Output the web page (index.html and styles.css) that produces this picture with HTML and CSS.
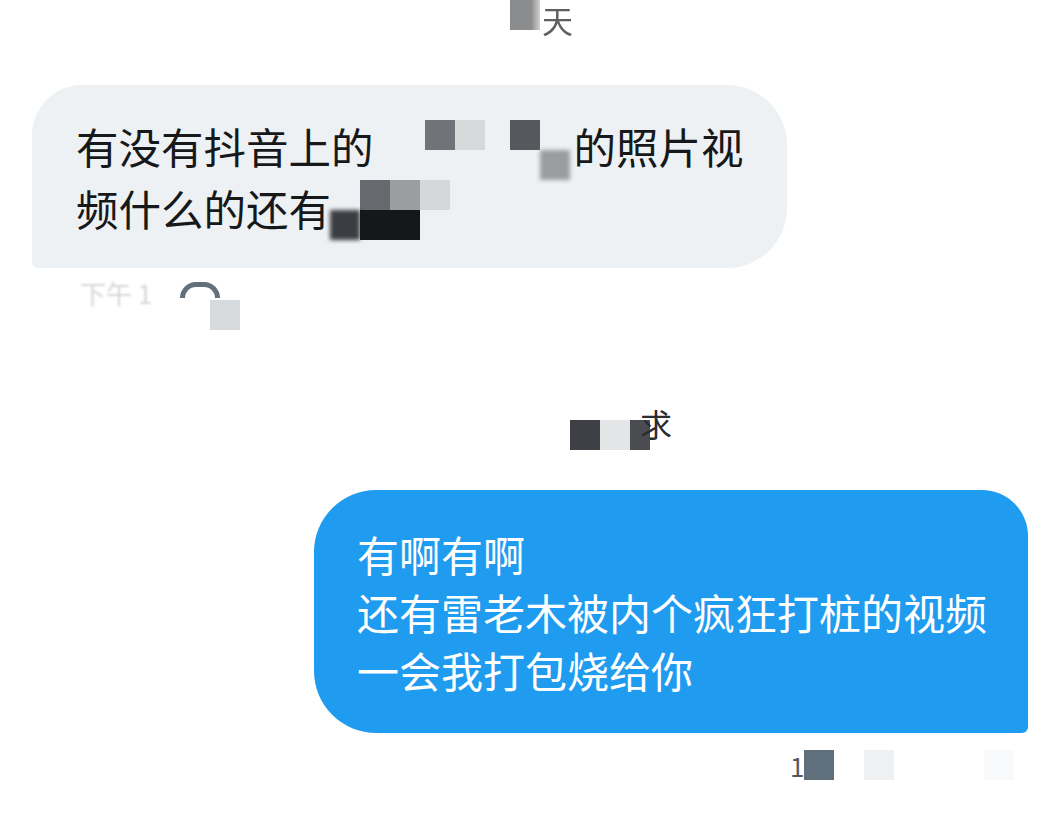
FILE: index.html
```html
<!DOCTYPE html>
<html lang="zh-CN">
<head>
  <meta charset="UTF-8">
  <title>聊天</title>
  <link rel="stylesheet" href="styles.css">
</head>
<body>

<div class="chat">
  <div class="day">
    <span class="tile t-day"></span>
    <span class="day-text">天</span>
  </div>

  <div class="bubble bubble-in">
    <p>有没有抖音上的<span class="hide hide-1"></span>的照片视</p>
    <p>频什么的还有<span class="hide hide-2"></span></p>
    <!-- 打码块 -->
    <span class="tile" style="left:393px;top:35px;background:#707378"></span>
    <span class="tile" style="left:423px;top:35px;background:#d6d8d9"></span>
    <span class="tile" style="left:478px;top:35px;background:#55585c"></span>
    <span class="tile soft" style="left:508px;top:65px;background:#9a9c9e"></span>
    <span class="tile" style="left:328px;top:95px;background:#66696d"></span>
    <span class="tile" style="left:358px;top:95px;background:#9b9ea1"></span>
    <span class="tile" style="left:388px;top:95px;background:#d5d7d8"></span>
    <span class="tile soft" style="left:298px;top:125px;background:#3a3d41"></span>
    <span class="tile wide" style="left:328px;top:125px;background:#15171a"></span>
  </div>

  <div class="meta meta-in">
    <span class="meta-text">下午 1</span>
    <span class="arc"></span>
    <span class="tile t-meta"></span>
  </div>

  <div class="request">
    <span class="tile" style="background:#3e4046"></span>
    <span class="tile" style="background:#e4e5e6"></span>
    <span class="tile narrow" style="background:#4a4c52"></span>
    <span class="request-text">求</span>
  </div>

  <div class="bubble bubble-out">
    <p>有啊有啊</p>
    <p>还有雷老木被内个疯狂打桩的视频</p>
    <p>一会我打包烧给你</p>
  </div>

  <div class="meta meta-out">
    <span class="meta-num">1:</span>
    <span class="tile t-num" style="background:#5f6f7c"></span>
    <span class="tile gap-l" style="background:#eef0f2"></span>
    <span class="tile gap-xl" style="background:#f8f9fa"></span>
  </div>
</div>

</body>
</html>
```

FILE: styles.css
```css
body {
  margin: 0;
  background: #fff;
  font-family: "Noto Sans CJK SC", "Noto Sans", sans-serif;
  color: #16181a;
}

.chat {
  width: 1063px;
  height: 838px;
  overflow: hidden;
}

p {
  margin: 0;
}

.tile {
  display: inline-block;
  width: 30px;
  height: 30px;
}

.tile.wide {
  width: 60px;
}

.tile.narrow {
  width: 20px;
}

.tile.soft {
  filter: blur(2px);
}

.bubble .tile {
  position: absolute;
}

.day {
  height: 40px;
  padding-top: 2px;
  box-sizing: border-box;
  padding-left: 510px;
  display: flex;
  align-items: flex-start;
}

.t-day {
  margin-top: -2px;
  background: linear-gradient(to right, #8b8c8e 70%, #d0d1d2);
}

.day-text {
  font-size: 31px;
  line-height: 36px;
  color: #444;
  margin-left: 2px;
  opacity: 0.85;
}

.bubble {
  position: relative;
  box-sizing: border-box;
  white-space: nowrap;
}

.bubble-in {
  margin: 45px 0 0 32px;
  width: 755px;
  padding: 30px 40px 29px 44px;
  font-size: 42.5px;
  line-height: 62px;
  background: #eef1f3;
  border-radius: 50px 60px 60px 5px;
}

.hide {
  display: inline-block;
  vertical-align: top;
}

.hide-1 {
  width: 200px;
  height: 62px;
}

.hide-2 {
  width: 120px;
  height: 62px;
}

.meta {
  display: flex;
  align-items: flex-start;
}

.meta-in {
  height: 62px;
  padding-left: 80px;
  position: relative;
}

.meta-text {
  margin-top: 10px;
  font-size: 26px;
  line-height: 30px;
  color: #d4d6d8;
  filter: blur(1px);
}

.arc {
  margin: 14px 0 0 28px;
  width: 40px;
  height: 16px;
  border: 5px solid #62707c;
  border-bottom: none;
  border-radius: 20px 20px 0 0;
  box-sizing: border-box;
}

.t-meta {
  position: absolute;
  left: 210px;
  top: 32px;
  background: #d8dbde;
}

.request {
  margin: 80px 0 0 570px;
  height: 40px;
  display: flex;
  align-items: flex-end;
}

.request-text {
  font-size: 32px;
  line-height: 38px;
  color: #2a2c30;
  margin: 0 0 8px -10px;
}

.bubble-out {
  margin: 40px 0 0 314px;
  width: 714px;
  padding: 35px 30px 34px 43px;
  font-size: 42px;
  line-height: 58px;
  color: #fff;
  background: #1f9bef;
  border-radius: 62px 46px 6px 62px;
}

.meta-out {
  margin-top: 17px;
  padding-left: 790px;
  align-items: flex-end;
  height: 32px;
}

.meta-num {
  font-size: 26px;
  line-height: 32px;
  color: #555a5f;
}

.t-num {
  margin-left: -8px;
  margin-bottom: 2px;
  background: linear-gradient(to right, rgba(95, 111, 124, 0.3), #5f6f7c 40%);
}

.gap-l {
  margin-left: 30px;
  margin-bottom: 2px;
}

.gap-xl {
  margin-left: 90px;
  margin-bottom: 2px;
}
```
